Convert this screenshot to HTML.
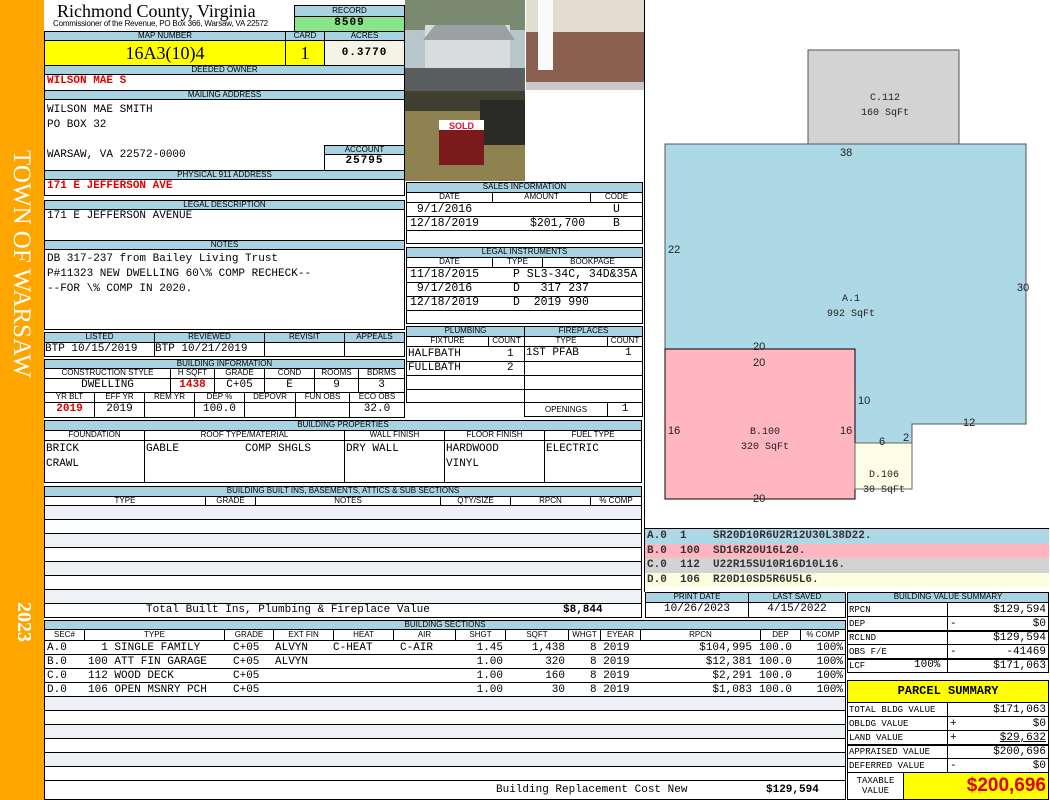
<!DOCTYPE html>
<html><head><meta charset="utf-8"><style>
body{margin:0;width:1050px;height:800px;position:relative;background:#fff;overflow:hidden}
.c{position:absolute;box-sizing:border-box;border:1px solid #000;overflow:hidden;white-space:nowrap;background:#fff}
.h{background:#a9d3e3;font:8px/8px "Liberation Sans",sans-serif;text-align:center;color:#000}
.v{font:11px/13px "Liberation Mono",monospace;padding:0 2px}
.r{color:#e00000;font-weight:bold}
.t{text-align:center}.rt{text-align:right}
.sh{background:#eef2f7}
.p{position:absolute;font:11px "Liberation Mono",monospace;white-space:pre;margin:0}
</style></head><body>
<div style="position:absolute;left:0;top:0;width:44px;height:800px;background:#ffa500"></div>
<div style="position:absolute;left:8px;top:150px;width:28px;height:230px;"><div style="transform:rotate(90deg);transform-origin:0 0;position:absolute;left:27px;top:0;width:260px;font:25px 'Liberation Serif',serif;color:#fff;white-space:nowrap">TOWN OF WARSAW</div></div>
<div style="position:absolute;left:8px;top:602px;width:28px;height:50px"><div style="transform:rotate(90deg);transform-origin:0 0;position:absolute;left:27px;top:0;width:60px;font:bold 20px 'Liberation Serif',serif;color:#fff">2023</div></div>

<div style="position:absolute;left:57px;top:1px;font:18px 'Liberation Serif',serif">Richmond County, Virginia</div>
<div style="position:absolute;left:53px;top:19px;font:8px 'Liberation Sans',sans-serif;letter-spacing:-.2px">Commissioner of the Revenue, PO Box 366, Warsaw, VA 22572</div>
<div class="c h" style="left:294px;top:5px;width:111px;height:12px;line-height:10px">RECORD</div>
<div class="c v t" style="left:294px;top:16px;width:111px;height:16px;background:#88e488;font-weight:bold;letter-spacing:1px">8509</div>
<div class="c h" style="left:44px;top:31px;width:242px;height:10px">MAP NUMBER</div>
<div class="c h" style="left:285px;top:31px;width:40px;height:10px">CARD</div>
<div class="c h" style="left:324px;top:31px;width:81px;height:10px">ACRES</div>
<div class="c t" style="left:44px;top:40px;width:242px;height:26px;background:#ffff00;font:18px/24px 'Liberation Serif',serif">16A3(10)4</div>
<div class="c t" style="left:285px;top:40px;width:40px;height:26px;background:#ffff00;font:18px/24px 'Liberation Serif',serif">1</div>
<div class="c v t" style="left:324px;top:40px;width:81px;height:26px;background:#f4f4e6;line-height:24px;font-weight:bold;letter-spacing:1px">0.3770</div>
<div class="c h" style="left:44px;top:65px;width:361px;height:10px">DEEDED OWNER</div>
<div class="c v r" style="left:44px;top:74px;width:361px;height:17px">WILSON MAE S</div>
<div class="c h" style="left:44px;top:90px;width:361px;height:10px">MAILING ADDRESS</div>
<div class="c v" style="left:44px;top:99px;width:361px;height:72px;line-height:15px;padding-top:3px">WILSON MAE SMITH<br>PO BOX 32<br><br>WARSAW, VA 22572-0000</div>
<div class="c h" style="left:324px;top:145px;width:81px;height:10px">ACCOUNT</div>
<div class="c v t" style="left:324px;top:154px;width:81px;height:17px;font-weight:bold;letter-spacing:1px">25795</div>
<div class="c h" style="left:44px;top:170px;width:361px;height:10px">PHYSICAL 911 ADDRESS</div>
<div class="c v r" style="left:44px;top:179px;width:361px;height:17px">171 E JEFFERSON AVE</div>
<div class="c h" style="left:44px;top:200px;width:361px;height:10px">LEGAL DESCRIPTION</div>
<div class="c v" style="left:44px;top:209px;width:361px;height:32px">171 E JEFFERSON AVENUE</div>
<div class="c h" style="left:44px;top:240px;width:361px;height:10px">NOTES</div>
<div class="c v" style="left:44px;top:249px;width:361px;height:81px;line-height:15px;padding-top:2px">DB 317-237 from Bailey Living Trust<br>P#11323 NEW DWELLING 60\% COMP RECHECK--<br>--FOR \% COMP IN 2020.</div>

<div class="c h" style="left:44px;top:332px;width:111px;height:11px">LISTED</div>
<div class="c h" style="left:154px;top:332px;width:111px;height:11px">REVIEWED</div>
<div class="c h" style="left:264px;top:332px;width:81px;height:11px">REVISIT</div>
<div class="c h" style="left:344px;top:332px;width:61px;height:11px">APPEALS</div>
<div class="c v" style="left:44px;top:342px;width:111px;height:15px;padding:0">BTP 10/15/2019</div>
<div class="c v" style="left:154px;top:342px;width:111px;height:15px;padding:0">BTP 10/21/2019</div>
<div class="c" style="left:264px;top:342px;width:81px;height:15px"></div>
<div class="c" style="left:344px;top:342px;width:61px;height:15px"></div>

<div class="c h" style="left:44px;top:359px;width:361px;height:10px">BUILDING INFORMATION</div>
<div class="c h" style="left:44px;top:368px;width:127px;height:11px;background:#fff">CONSTRUCTION STYLE</div>
<div class="c h" style="left:170px;top:368px;width:45px;height:11px;background:#fff">H SQFT</div>
<div class="c h" style="left:214px;top:368px;width:51px;height:11px;background:#fff">GRADE</div>
<div class="c h" style="left:264px;top:368px;width:51px;height:11px;background:#fff">COND</div>
<div class="c h" style="left:314px;top:368px;width:45px;height:11px;background:#fff">ROOMS</div>
<div class="c h" style="left:358px;top:368px;width:47px;height:11px;background:#fff">BDRMS</div>
<div class="c v t" style="left:44px;top:378px;width:127px;height:15px">DWELLING</div>
<div class="c v t r" style="left:170px;top:378px;width:45px;height:15px">1438</div>
<div class="c v t" style="left:214px;top:378px;width:51px;height:15px">C+05</div>
<div class="c v t" style="left:264px;top:378px;width:51px;height:15px">E</div>
<div class="c v t" style="left:314px;top:378px;width:45px;height:15px">9</div>
<div class="c v t" style="left:358px;top:378px;width:47px;height:15px">3</div>
<div class="c h" style="left:44px;top:392px;width:51px;height:11px;background:#fff">YR BLT</div>
<div class="c h" style="left:94px;top:392px;width:51px;height:11px;background:#fff">EFF YR</div>
<div class="c h" style="left:144px;top:392px;width:51px;height:11px;background:#fff">REM YR</div>
<div class="c h" style="left:194px;top:392px;width:51px;height:11px;background:#fff">DEP %</div>
<div class="c h" style="left:244px;top:392px;width:52px;height:11px;background:#fff">DEPOVR</div>
<div class="c h" style="left:295px;top:392px;width:55px;height:11px;background:#fff">FUN OBS</div>
<div class="c h" style="left:349px;top:392px;width:56px;height:11px;background:#fff">ECO OBS</div>
<div class="c v t r" style="left:44px;top:402px;width:51px;height:16px">2019</div>
<div class="c v t" style="left:94px;top:402px;width:51px;height:16px">2019</div>
<div class="c v" style="left:144px;top:402px;width:51px;height:16px"></div>
<div class="c v t" style="left:194px;top:402px;width:51px;height:16px">100.0</div>
<div class="c v" style="left:244px;top:402px;width:52px;height:16px"></div>
<div class="c v" style="left:295px;top:402px;width:55px;height:16px"></div>
<div class="c v t" style="left:349px;top:402px;width:56px;height:16px">32.0</div>

<div class="c h" style="left:44px;top:420px;width:598px;height:11px">BUILDING PROPERTIES</div>
<div class="c h" style="left:44px;top:430px;width:101px;height:11px;background:#fff">FOUNDATION</div>
<div class="c h" style="left:144px;top:430px;width:201px;height:11px;background:#fff">ROOF TYPE/MATERIAL</div>
<div class="c h" style="left:344px;top:430px;width:101px;height:11px;background:#fff">WALL FINISH</div>
<div class="c h" style="left:444px;top:430px;width:101px;height:11px;background:#fff">FLOOR FINISH</div>
<div class="c h" style="left:544px;top:430px;width:98px;height:11px;background:#fff">FUEL TYPE</div>
<div class="c v" style="left:44px;top:440px;width:101px;height:43px;padding:1px 1px;line-height:15px">BRICK<br>CRAWL</div>
<div class="c v" style="left:144px;top:440px;width:201px;height:43px;padding:1px 1px;line-height:15px">GABLE<span style="position:absolute;left:100px">COMP SHGLS</span></div>
<div class="c v" style="left:344px;top:440px;width:101px;height:43px;padding:1px 1px;line-height:15px">DRY WALL</div>
<div class="c v" style="left:444px;top:440px;width:101px;height:43px;padding:1px 1px;line-height:15px">HARDWOOD<br>VINYL</div>
<div class="c v" style="left:544px;top:440px;width:98px;height:43px;padding:1px 1px;line-height:15px">ELECTRIC</div>

<div class="c h" style="left:44px;top:486px;width:598px;height:11px">BUILDING BUILT INS, BASEMENTS, ATTICS &amp; SUB SECTIONS</div>
<div class="c h" style="left:44px;top:496px;width:162px;height:10px;background:#fff">TYPE</div>
<div class="c h" style="left:205px;top:496px;width:51px;height:10px;background:#fff">GRADE</div>
<div class="c h" style="left:255px;top:496px;width:186px;height:10px;background:#fff">NOTES</div>
<div class="c h" style="left:440px;top:496px;width:71px;height:10px;background:#fff">QTY/SIZE</div>
<div class="c h" style="left:510px;top:496px;width:81px;height:10px;background:#fff">RPCN</div>
<div class="c h" style="left:590px;top:496px;width:52px;height:10px;background:#fff">% COMP</div>
<div class="c sh" style="left:44px;top:505px;width:598px;height:15px"></div>
<div class="c" style="left:44px;top:519px;width:598px;height:15px"></div>
<div class="c sh" style="left:44px;top:533px;width:598px;height:15px"></div>
<div class="c" style="left:44px;top:547px;width:598px;height:15px"></div>
<div class="c sh" style="left:44px;top:561px;width:598px;height:15px"></div>
<div class="c" style="left:44px;top:575px;width:598px;height:15px"></div>
<div class="c sh" style="left:44px;top:589px;width:598px;height:15px"></div>
<div class="c v" style="left:44px;top:603px;width:598px;height:15px"><span style="position:absolute;left:101px">Total Built Ins, Plumbing &amp; Fireplace Value</span><span style="position:absolute;left:518px;font-weight:bold">$8,844</span></div>

<div class="c h" style="left:44px;top:620px;width:802px;height:10px;line-height:7px">BUILDING SECTIONS</div>
<div class="c h" style="left:44px;top:629px;width:41px;height:12px;background:#fff;line-height:10px">SEC#</div>
<div class="c h" style="left:84px;top:629px;width:141px;height:12px;background:#fff;line-height:10px">TYPE</div>
<div class="c h" style="left:224px;top:629px;width:50px;height:12px;background:#fff;line-height:10px">GRADE</div>
<div class="c h" style="left:273px;top:629px;width:61px;height:12px;background:#fff;line-height:10px">EXT FIN</div>
<div class="c h" style="left:333px;top:629px;width:61px;height:12px;background:#fff;line-height:10px">HEAT</div>
<div class="c h" style="left:393px;top:629px;width:63px;height:12px;background:#fff;line-height:10px">AIR</div>
<div class="c h" style="left:455px;top:629px;width:51px;height:12px;background:#fff;line-height:10px">SHGT</div>
<div class="c h" style="left:505px;top:629px;width:64px;height:12px;background:#fff;line-height:10px">SQFT</div>
<div class="c h" style="left:568px;top:629px;width:33px;height:12px;background:#fff;line-height:10px">WHGT</div>
<div class="c h" style="left:600px;top:629px;width:41px;height:12px;background:#fff;line-height:10px">EYEAR</div>
<div class="c h" style="left:640px;top:629px;width:121px;height:12px;background:#fff;line-height:10px">RPCN</div>
<div class="c h" style="left:760px;top:629px;width:41px;height:12px;background:#fff;line-height:10px">DEP</div>
<div class="c h" style="left:800px;top:629px;width:46px;height:12px;background:#fff;line-height:10px">% COMP</div>
<div class="c" style="left:44px;top:640px;width:802px;height:15px"></div>
<div class="c" style="left:44px;top:654px;width:802px;height:15px"></div>
<div class="c" style="left:44px;top:668px;width:802px;height:15px"></div>
<div class="c" style="left:44px;top:682px;width:802px;height:15px"></div>
<div class="c sh" style="left:44px;top:696px;width:802px;height:15px"></div>
<div class="c" style="left:44px;top:710px;width:802px;height:15px"></div>
<div class="c sh" style="left:44px;top:724px;width:802px;height:15px"></div>
<div class="c" style="left:44px;top:738px;width:802px;height:15px"></div>
<div class="c sh" style="left:44px;top:752px;width:802px;height:15px"></div>
<div class="c" style="left:44px;top:766px;width:802px;height:15px"></div>
<div class="c" style="left:44px;top:780px;width:802px;height:20px"></div>
<div class="p" style="left:47px;top:641px;line-height:14px">A.0
B.0
C.0
D.0</div>
<div class="p" style="left:88px;top:641px;line-height:14px">  1 SINGLE FAMILY
100 ATT FIN GARAGE
112 WOOD DECK
106 OPEN MSNRY PCH</div>
<div class="p" style="left:233px;top:641px;line-height:14px">C+05
C+05
C+05
C+05</div>
<div class="p" style="left:275px;top:641px;line-height:14px">ALVYN
ALVYN</div>
<div class="p" style="left:333px;top:641px;line-height:14px">C-HEAT</div>
<div class="p" style="left:400px;top:641px;line-height:14px">C-AIR</div>
<div class="p" style="left:440px;top:641px;width:63px;text-align:right;line-height:14px">1.45
1.00
1.00
1.00</div>
<div class="p" style="left:505px;top:641px;width:60px;text-align:right;line-height:14px">1,438
320
160
30</div>
<div class="p" style="left:590px;top:641px;line-height:14px">8 2019
8 2019
8 2019
8 2019</div>
<div class="p" style="left:650px;top:641px;width:102px;text-align:right;line-height:14px">$104,995
$12,381
$2,291
$1,083</div>
<div class="p" style="left:759px;top:641px;line-height:14px">100.0
100.0
100.0
100.0</div>
<div class="p" style="left:800px;top:641px;width:43px;text-align:right;line-height:14px">100%
100%
100%
100%</div>
<div class="p" style="left:496px;top:784px">Building Replacement Cost New</div>
<div class="p" style="left:766px;top:784px;font-weight:bold">$129,594</div>

<svg style="position:absolute;left:405px;top:0" width="240" height="181">
<rect x="0" y="0" width="120" height="97" fill="#b8c6cc"/>
<rect x="0" y="0" width="120" height="30" fill="#7a8a70"/>
<rect x="20" y="25" width="85" height="45" fill="#d8dcdc"/>
<polygon points="18,40 30,25 100,25 110,40" fill="#9aa0a4"/>
<rect x="0" y="68" width="120" height="29" fill="#5a5e60"/>
<rect x="121" y="0" width="119" height="90" fill="#e2ddd0"/>
<rect x="121" y="32" width="119" height="52" fill="#8a6050"/>
<rect x="133" y="0" width="15" height="70" fill="#fafafa"/>
<rect x="121" y="82" width="119" height="8" fill="#c8c8cc"/>
<rect x="0" y="91" width="120" height="90" fill="#8e8250"/>
<rect x="0" y="91" width="120" height="20" fill="#404030"/>
<rect x="75" y="100" width="45" height="45" fill="#2a2a26"/>
<rect x="34" y="120" width="45" height="10" fill="#fff"/>
<text x="56.5" y="129" font-family="Liberation Sans" font-size="9" font-weight="bold" fill="#e01030" text-anchor="middle">SOLD</text>
<rect x="34" y="130" width="45" height="35" fill="#7a1a1a"/>
</svg>
<div style="position:absolute;left:644px;top:0;width:1px;height:592px;background:#000"></div>

<div class="c h" style="left:406px;top:182px;width:237px;height:11px">SALES INFORMATION</div>
<div class="c h" style="left:406px;top:192px;width:87px;height:11px;background:#fff">DATE</div>
<div class="c h" style="left:492px;top:192px;width:99px;height:11px;background:#fff">AMOUNT</div>
<div class="c h" style="left:590px;top:192px;width:53px;height:11px;background:#fff">CODE</div>
<div class="c" style="left:406px;top:202px;width:237px;height:42px"></div>
<div style="position:absolute;left:406px;top:230px;width:237px;height:1px;background:#000"></div>
<div style="position:absolute;left:406px;top:216px;width:237px;height:1px;background:#000"></div>
<div class="p" style="left:410px;top:203px;line-height:14px;font-size:11.5px"> 9/1/2016
12/18/2019</div>
<div class="p" style="left:530px;top:217px;font-size:11.5px">$201,700</div>
<div class="p" style="left:613px;top:203px;line-height:14px;font-size:11.5px">U
B</div>
<div class="c h" style="left:406px;top:247px;width:237px;height:11px">LEGAL INSTRUMENTS</div>
<div class="c h" style="left:406px;top:257px;width:87px;height:11px;background:#fff">DATE</div>
<div class="c h" style="left:492px;top:257px;width:51px;height:11px;background:#fff">TYPE</div>
<div class="c h" style="left:542px;top:257px;width:101px;height:11px;background:#fff">BOOKPAGE</div>
<div class="c" style="left:406px;top:267px;width:237px;height:57px"></div>
<div style="position:absolute;left:406px;top:282px;width:237px;height:1px;background:#000"></div>
<div style="position:absolute;left:406px;top:296px;width:237px;height:1px;background:#000"></div>
<div style="position:absolute;left:406px;top:310px;width:237px;height:1px;background:#000"></div>
<div class="p" style="left:410px;top:268px;line-height:14px;font-size:11.5px">11/18/2015
 9/1/2016
12/18/2019</div>
<div class="p" style="left:513px;top:268px;line-height:14px;font-size:11.5px;width:130px;overflow:hidden">P SL3-34C, 34D&amp;35A
D   317 237
D  2019 990</div>

<div class="c h" style="left:406px;top:326px;width:119px;height:11px">PLUMBING</div>
<div class="c h" style="left:524px;top:326px;width:119px;height:11px">FIREPLACES</div>
<div class="c h" style="left:406px;top:336px;width:83px;height:11px;background:#fff">FIXTURE</div>
<div class="c h" style="left:488px;top:336px;width:37px;height:11px;background:#fff">COUNT</div>
<div class="c h" style="left:524px;top:336px;width:84px;height:11px;background:#fff">TYPE</div>
<div class="c h" style="left:607px;top:336px;width:36px;height:11px;background:#fff">COUNT</div>
<div class="c" style="left:406px;top:346px;width:119px;height:57px"></div>
<div class="c" style="left:524px;top:346px;width:119px;height:57px"></div>
<div style="position:absolute;left:406px;top:361px;width:237px;height:1px;background:#000"></div>
<div style="position:absolute;left:406px;top:375px;width:237px;height:1px;background:#000"></div>
<div style="position:absolute;left:406px;top:389px;width:237px;height:1px;background:#000"></div>
<div class="p" style="left:408px;top:347px;line-height:14px">HALFBATH       1
FULLBATH       2</div>
<div class="p" style="left:526px;top:347px">1ST PFAB       1</div>
<div class="c h" style="left:524px;top:402px;width:84px;height:15px;background:#fff;line-height:13px">OPENINGS</div>
<div class="c v t" style="left:607px;top:402px;width:36px;height:15px">1</div>

<svg style="position:absolute;left:645px;top:0" width="404" height="528" font-family="Liberation Sans" font-size="11">
<rect x="163" y="50" width="151" height="94" fill="#d3d3d3" stroke="#555"/>
<polygon points="20,144 381,144 381,424 267,424 267,443 210,443 210,349 20,349" fill="#add8e6" stroke="#555"/>
<rect x="20" y="349" width="190" height="150" fill="#ffb6c1" stroke="#000"/>
<rect x="210" y="443" width="57" height="46" fill="#fffde6" stroke="#666"/>
<g font-family="Liberation Mono" font-size="10" text-anchor="middle" fill="#222">
<text x="240" y="100">C.112</text><text x="240" y="115">160 SqFt</text>
<text x="206" y="301">A.1</text><text x="206" y="316">992 SqFt</text>
<text x="120" y="434">B.100</text><text x="120" y="449">320 SqFt</text>
<text x="239" y="477">D.106</text><text x="239" y="492">30 SqFt</text>
</g>
<g fill="#222">
<text x="195" y="156">38</text><text x="23" y="253">22</text><text x="372" y="291">30</text>
<text x="108" y="350">20</text><text x="108" y="366">20</text><text x="213" y="404">10</text>
<text x="23" y="434">16</text><text x="195" y="434">16</text><text x="318" y="426">12</text>
<text x="234" y="445">6</text><text x="258" y="441">2</text><text x="108" y="502">20</text>
</g>
</svg>
<div style="position:absolute;left:645px;top:528px;width:404px;height:1px;background:#000"></div>
<div class="p" style="left:645px;top:529px;width:404px;line-height:14.5px;font-weight:bold;color:#333"><div style="background:#add8e6;padding-left:2px">A.0  1    SR20D10R6U2R12U30L38D22.</div><div style="background:#ffb6c1;padding-left:2px">B.0  100  SD16R20U16L20.</div><div style="background:#d3d3d3;padding-left:2px">C.0  112  U22R15SU10R16D10L16.</div><div style="background:#fffde0;padding-left:2px">D.0  106  R20D10SD5R6U5L6.</div></div>

<div class="c h" style="left:645px;top:592px;width:104px;height:11px">PRINT DATE</div>
<div class="c h" style="left:748px;top:592px;width:98px;height:11px">LAST SAVED</div>
<div class="c v t" style="left:645px;top:602px;width:104px;height:16px">10/26/2023</div>
<div class="c v t" style="left:748px;top:602px;width:98px;height:16px">4/15/2022</div>

<div class="c h" style="left:847px;top:592px;width:202px;height:11px">BUILDING VALUE SUMMARY</div>
<div class="c" style="left:847px;top:602px;width:101px;height:71px"></div>
<div class="c" style="left:947px;top:602px;width:102px;height:71px"></div>
<div style="position:absolute;left:847px;top:616px;width:202px;height:1px;background:#000"></div>
<div style="position:absolute;left:847px;top:630px;width:202px;height:2px;background:#000"></div>
<div style="position:absolute;left:847px;top:644px;width:202px;height:1px;background:#000"></div>
<div style="position:absolute;left:847px;top:658px;width:202px;height:2px;background:#000"></div>
<div class="p" style="left:849px;top:603px;font-size:9px;line-height:14px">RPCN
DEP
RCLND
OBS F/E
LCF</div>
<div class="p" style="left:914px;top:659px">100%</div>
<div class="p" style="left:950px;top:617px;line-height:14px">-

-</div>
<div class="p" style="left:950px;top:603px;width:96px;text-align:right;line-height:14px">$129,594
$0
$129,594
-41469
$171,063</div>

<div class="c" style="left:847px;top:680px;width:202px;height:23px;background:#ffff00;font:bold 12px/21px 'Liberation Mono',monospace;text-align:center">PARCEL SUMMARY</div>
<div class="c" style="left:847px;top:702px;width:101px;height:71px"></div>
<div class="c" style="left:947px;top:702px;width:102px;height:71px"></div>
<div style="position:absolute;left:847px;top:716px;width:202px;height:1px;background:#000"></div>
<div style="position:absolute;left:847px;top:730px;width:202px;height:1px;background:#000"></div>
<div style="position:absolute;left:847px;top:744px;width:202px;height:2px;background:#000"></div>
<div style="position:absolute;left:847px;top:758px;width:202px;height:1px;background:#000"></div>
<div class="p" style="left:849px;top:703px;font-size:9px;line-height:14px">TOTAL BLDG VALUE
OBLDG VALUE
LAND VALUE
APPRAISED VALUE
DEFERRED VALUE</div>
<div class="p" style="left:950px;top:717px;line-height:14px">+
+

-</div>
<div class="p" style="left:950px;top:703px;width:96px;text-align:right;line-height:14px">$171,063
$0
<u>$29,632</u>
$200,696
$0</div>
<div class="c" style="left:847px;top:772px;width:57px;height:28px;font:9px/10px 'Liberation Mono',monospace;text-align:center;padding-top:3px">TAXABLE<br>VALUE</div>
<div class="c" style="left:903px;top:772px;width:146px;height:28px;background:#ffff00;color:#e00000;font:bold 19px/26px 'Liberation Sans',sans-serif;text-align:right;padding-right:2px">$200,696</div>
</body></html>
